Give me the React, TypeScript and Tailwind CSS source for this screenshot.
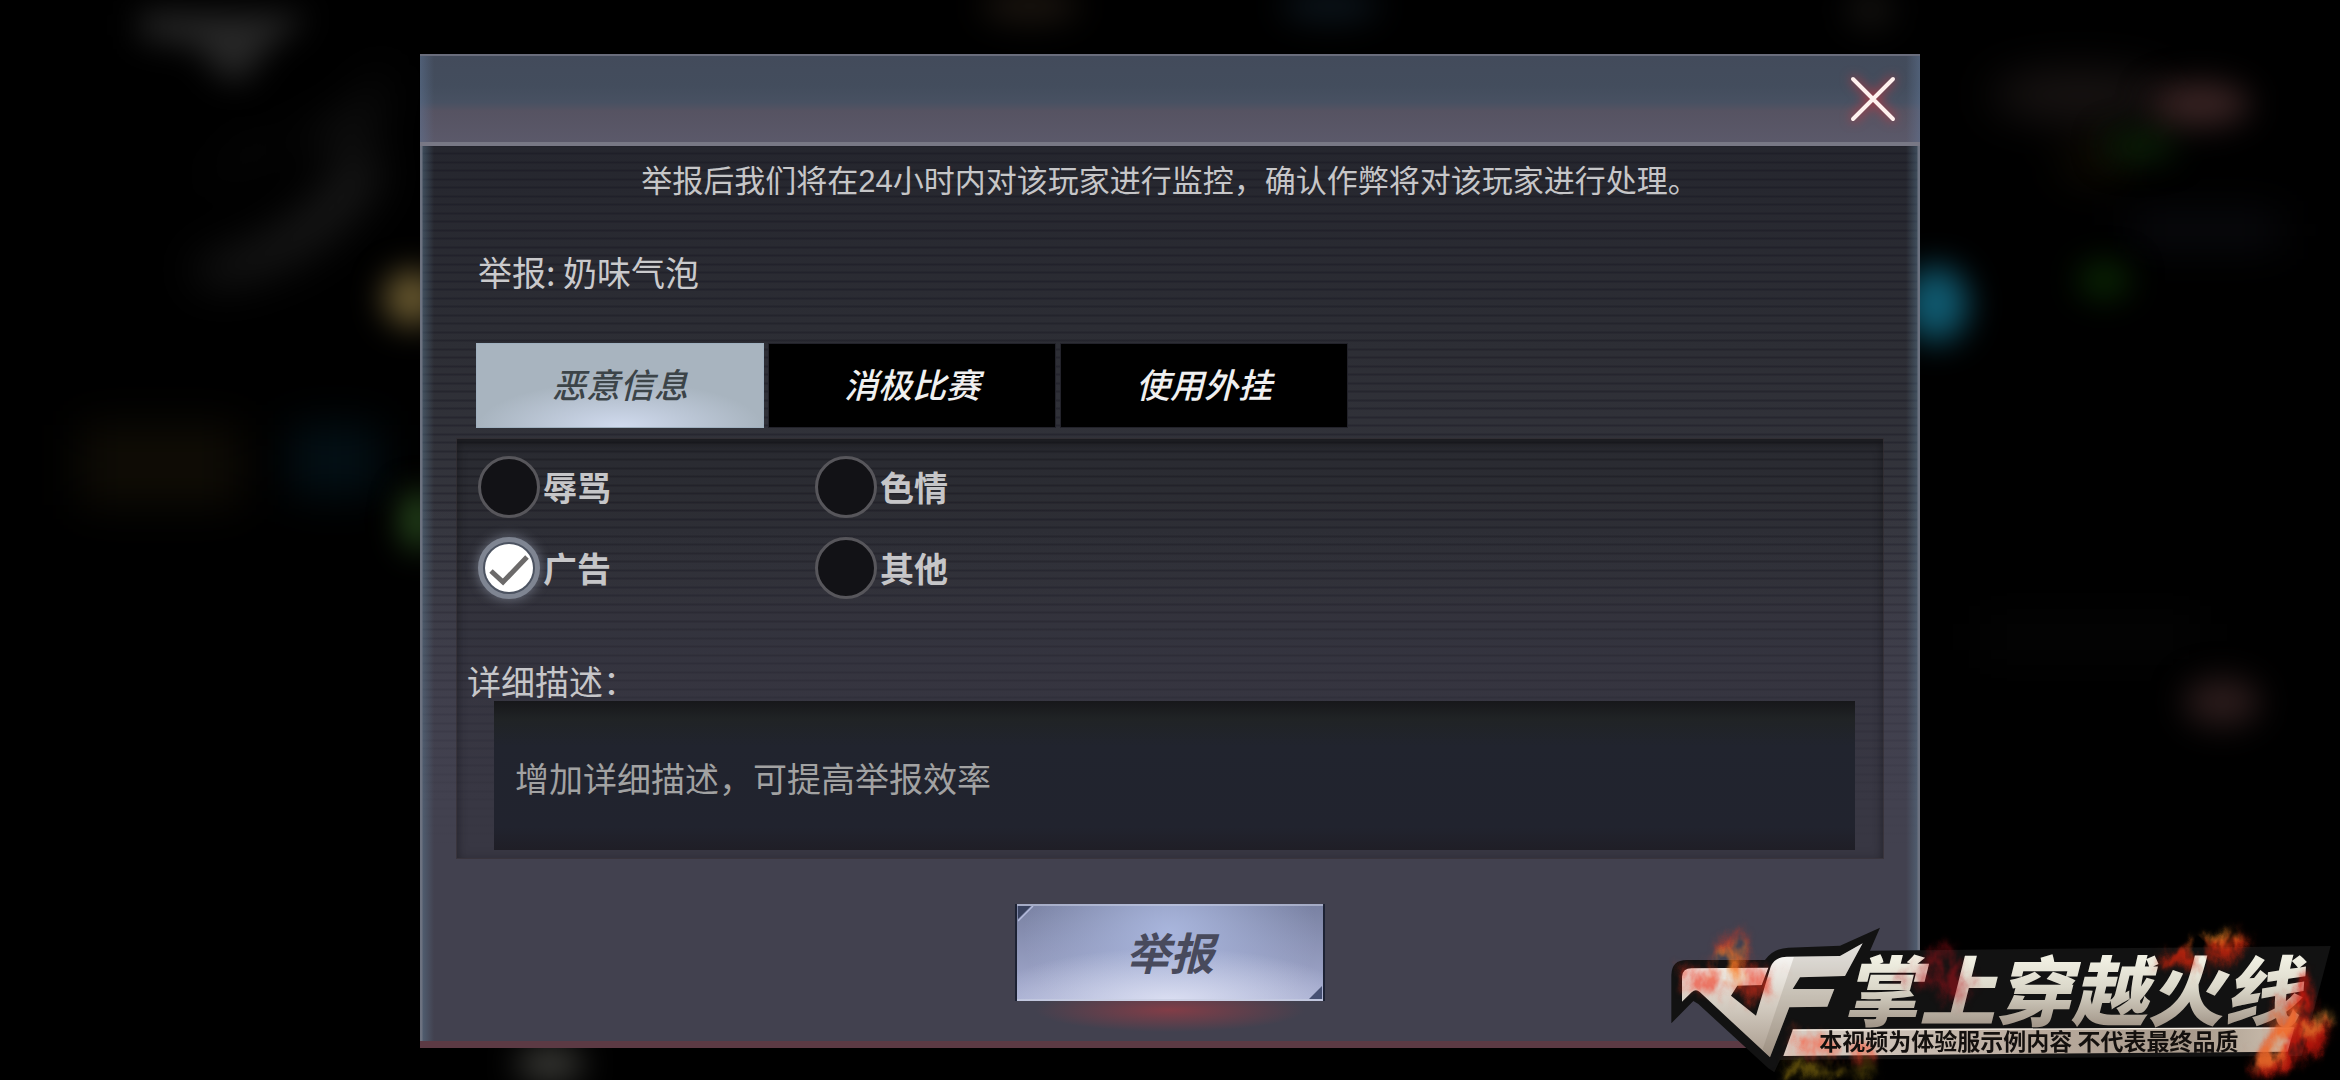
import { useState } from "react";

const TABS = ["恶意信息", "消极比赛", "使用外挂"];
const REASONS = ["辱骂", "色情", "广告", "其他"];

/* Out-of-focus lobby lights behind the dialog */
function Backdrop() {
  return (
    <svg
      viewBox="0 0 2340 1080"
      preserveAspectRatio="xMidYMid slice"
      aria-hidden="true"
      className="pointer-events-none absolute inset-0 h-full w-full"
    >
      <defs>
        <filter id="soft" x="-10%" y="-10%" width="120%" height="120%" colorInterpolationFilters="sRGB">
          <feGaussianBlur stdDeviation="16" />
        </filter>
        <filter id="wide" x="-10%" y="-10%" width="120%" height="120%" colorInterpolationFilters="sRGB">
          <feGaussianBlur stdDeviation="22" />
        </filter>
      </defs>
      <g filter="url(#wide)">
        <path d="M190 190 L350 110 L390 60 L370 150 L260 140 Z" fill="#101010" />
        <path d="M190 265 Q310 235 350 150 L385 170 Q330 270 210 285 Z" fill="#1a1a1a" />
        <rect x="80" y="425" width="160" height="80" fill="#0f0c05" />
        <rect x="290" y="425" width="90" height="70" fill="#031016" />
        <ellipse cx="2080" cy="95" rx="90" ry="24" fill="#1a1514" />
        <ellipse cx="2095" cy="160" rx="34" ry="20" fill="#120d04" />
        <rect x="2130" y="215" width="150" height="30" fill="#0b0c11" />
        <rect x="1980" y="620" width="220" height="34" fill="#050505" />
      </g>
      <g filter="url(#soft)">
        <path d="M140 12 L310 15 L265 50 L245 80 L225 80 L195 45 L140 38 Z" fill="#272727" />
        <ellipse cx="412" cy="298" rx="28" ry="28" fill="#6a5a30" />
        <ellipse cx="418" cy="520" rx="16" ry="30" fill="#2b5020" />
        <ellipse cx="1936" cy="304" rx="32" ry="38" fill="#105a70" />
        <ellipse cx="2200" cy="104" rx="50" ry="22" fill="#3a2424" />
        <ellipse cx="2140" cy="146" rx="36" ry="14" fill="#0c2408" />
        <ellipse cx="2104" cy="280" rx="26" ry="18" fill="#0a2804" />
        <ellipse cx="2222" cy="702" rx="38" ry="24" fill="#2c1c1c" />
        <ellipse cx="550" cy="1064" rx="34" ry="18" fill="#3c3c38" />
        <ellipse cx="1030" cy="6" rx="50" ry="16" fill="#1c1610" />
        <ellipse cx="1330" cy="6" rx="50" ry="16" fill="#0c151c" />
        <ellipse cx="1870" cy="10" rx="24" ry="18" fill="#141210" />
      </g>
    </svg>
  );
}

function Reason({ name, checked, onPick }: { name: string; checked: boolean; onPick: () => void }) {
  return (
    <label className="flex cursor-pointer items-center gap-[3px] text-[34px] leading-10 font-bold text-[#c6c6c8]">
      <span className="grid size-[62px] shrink-0 place-items-center">
        <input
          type="radio"
          name="reason"
          checked={checked}
          onChange={onPick}
          className="col-start-1 row-start-1 size-[62px] appearance-none rounded-full border-[3px] border-[#57565b] bg-[#121216] checked:border-[5px] checked:border-[#7f8592] checked:bg-[#4c5361] checked:shadow-[0_0_12px_1px_rgba(170,180,200,0.45)]"
        />
        {checked && (
          <svg viewBox="0 0 48 48" aria-hidden="true" className="pointer-events-none col-start-1 row-start-1 size-12">
            <circle cx="24" cy="24" r="24" fill="#fff" />
            <path d="M6 27 L18 38 L42 13" fill="none" stroke="#6c6a6a" strokeWidth="5" />
          </svg>
        )}
      </span>
      {name}
    </label>
  );
}

/* Channel watermark: CF mark, title plate, caption strip and flames */
function Watermark() {
  return (
    <svg
      viewBox="0 0 2100 540"
      role="img"
      aria-label="掌上穿越火线"
      className="pointer-events-none absolute right-0 bottom-0 z-20 w-[700px]"
    >
      <defs>
        <linearGradient id="metal" x1="0" y1="0" x2="0" y2="1">
          <stop offset="0" stopColor="#ffffff" />
          <stop offset="0.45" stopColor="#dcd6cc" />
          <stop offset="1" stopColor="#a89a8c" />
        </linearGradient>
        <linearGradient id="title" x1="0" y1="0" x2="0" y2="1">
          <stop offset="0.25" stopColor="#f0efe2" />
          <stop offset="0.5" stopColor="#dcd9cb" />
          <stop offset="0.85" stopColor="#a3978a" />
        </linearGradient>
        <linearGradient id="strip" x1="0" y1="0" x2="1" y2="0">
          <stop offset="0" stopColor="#d8cfc6" />
          <stop offset="0.5" stopColor="#b9aa9d" />
          <stop offset="0.8" stopColor="#a89a8c" />
          <stop offset="1" stopColor="#cfc2b2" />
        </linearGradient>
        <filter id="flame" x="-20%" y="-30%" width="140%" height="160%" colorInterpolationFilters="sRGB">
          <feTurbulence type="fractalNoise" baseFrequency="0.014 0.009" numOctaves="4" seed="11" result="n" />
          <feGaussianBlur in="SourceGraphic" stdDeviation="14" result="b" />
          <feDisplacementMap in="b" in2="n" scale="90" xChannelSelector="R" yChannelSelector="G" result="d" />
          <feColorMatrix in="n" type="matrix" values="0 0 0 0 1  0 0 0 0 1  0 0 0 0 1  0 0 3 0 -0.8" result="m" />
          <feComposite in="d" in2="m" operator="in" />
        </filter>
      </defs>

      <path
        d="M94 370 V225 Q95 180 140 180 H375 Q400 145 445 143 L600 137 L720 83 L690 152 L2072 138 L1985 468 L420 480 L403 517 L385 505 L175 312 L160 303 Z"
        fill="#121212"
      />
      <path
        d="M126 305 V230 Q128 205 155 205 L385 203 L365 255 L292 257 L273 287 L348 347 L392 200 Q405 170 440 170 L600 168 L668 130 L615 228 L480 232 L458 267 L583 267 L562 320 L448 322 L390 472 L180 277 Q168 265 155 277 Z"
        fill="url(#metal)"
      />
      <path
        d="M462 170 L600 168 L668 130 L615 228 L480 232 L458 267 L583 267 L562 320 L448 322 L390 472 L368 448 Z"
        fill="#6b5c4c"
        opacity="0.18"
      />
      <path d="M458 390 L1963 384 L1943 455 L430 468 Z" fill="url(#strip)" />
      <path d="M458 390 L1963 384" stroke="#f3ece2" strokeWidth="4" />

      <text
        x="610"
        y="360"
        fontSize="228"
        fontWeight="900"
        fontStyle="italic"
        fontFamily="'Noto Sans CJK SC', sans-serif"
        fill="url(#title)"
      >
        掌上穿越火线
      </text>

      <g filter="url(#flame)">
        <path d="M130 260 Q120 180 190 190 Q230 100 300 100 Q340 150 330 200 Q430 190 390 280 Q300 330 250 270 Q190 290 130 260Z" fill="#f0301a" opacity="0.6" />
        <path d="M220 200 Q270 80 310 160 Q330 230 280 280 Q240 250 220 200Z" fill="#ffa02a" opacity="0.6" />
        <path d="M780 250 Q760 190 840 200 Q940 80 960 180 Q1020 250 960 320 Q900 310 890 240 Z" fill="#b80f1a" opacity="0.5" />
        <path d="M460 400 Q600 380 640 430 Q740 450 690 480 Q560 490 450 460Z" fill="#ff4a2a" opacity="0.6" />
        <path d="M420 500 Q560 480 720 510 Q640 540 430 535Z" fill="#8a7010" opacity="0.7" />
        <path d="M1560 190 Q1600 130 1720 120 Q1790 100 1830 80 Q1820 160 1760 190 Q1660 220 1560 190Z" fill="#d0240c" opacity="0.8" />
        <path d="M1640 135 Q1740 90 1820 95 Q1760 145 1650 150Z" fill="#ff9a2a" opacity="0.7" />
        <path d="M1850 530 Q1850 400 1930 330 Q1960 220 2000 210 Q2050 270 2020 340 Q2080 360 2050 420 Q2000 510 1850 530Z" fill="#d8180c" opacity="0.8" />
        <path d="M1860 500 Q1860 410 1920 350 Q1970 310 1950 270 Q2000 360 1940 420 Q1940 500 1860 500Z" fill="#ff9a3a" opacity="0.6" />
        <path d="M1990 370 Q2050 370 2070 320 Q2080 380 2010 400Z" fill="#ffb040" opacity="0.7" />
      </g>

      <text x="538" y="451" fontSize="69" fontWeight="700" fontFamily="'Noto Sans CJK SC', sans-serif" fill="#14100e">
        本视频为体验服示例内容 不代表最终品质
      </text>
    </svg>
  );
}

export default function App() {
  const [tab, setTab] = useState(0);
  const [reason, setReason] = useState("广告");

  return (
    <main className="relative flex min-h-screen flex-col items-center overflow-hidden bg-black pt-[54px] pb-8 font-['Noto_Sans_CJK_SC',sans-serif]">
      <Backdrop />

      {/* Layers from the top: rim light, fade-out of the scan lines, scan lines, base shade */}
      <section
        role="dialog"
        aria-label="举报"
        className="z-10 flex w-full max-w-[1500px] flex-col bg-[linear-gradient(to_right,#6c7280_0,#6c7280_2px,rgba(100,135,160,0.38)_3px,transparent_14px,transparent_calc(100%-14px),rgba(100,135,160,0.38)_calc(100%-3px),#6c7280_calc(100%-2px),#6c7280),linear-gradient(to_bottom,transparent_45%,#42414f_80%),repeating-linear-gradient(to_bottom,transparent_0,transparent_5px,rgba(18,16,28,0.32)_6px,rgba(18,16,28,0.32)_7px,transparent_8px),linear-gradient(to_bottom,#25262e_9%,#2d2e35_30%,#36373f_50%,#42414f_75%)] bg-[length:100%_100%,100%_100%,100%_17px,100%_100%]"
      >
        <header className="flex h-[92px] items-center justify-end border-t-2 border-b-4 border-t-[#6a6d7c] border-b-[#787885] bg-[linear-gradient(to_right,rgba(100,125,160,0.4)_0,transparent_14px,transparent_calc(100%-14px),rgba(100,125,160,0.4)),linear-gradient(to_bottom,#434b5b_0%,#434d5d_35%,#485162_54%,#565362_64%,#5b596a_100%)] pr-[15px]">
          <button type="button" aria-label="关闭" className="grid size-16 cursor-pointer place-items-center">
            <svg
              viewBox="0 0 44 44"
              className="size-11 overflow-visible drop-shadow-[0_0_6px_#e03038]"
              fill="none"
              stroke="#fff1ee"
              strokeWidth="4"
              strokeLinecap="round"
            >
              <path d="M2 2 L42 42 M42 2 L2 42" />
            </svg>
          </button>
        </header>

        <p className="pt-4 text-center font-['Liberation_Sans','Noto_Sans_CJK_SC',sans-serif] text-[31px] leading-10 text-[#c6c6c8]">
          举报后我们将在24小时内对该玩家进行监控，确认作弊将对该玩家进行处理。
        </p>
        <h1 className="mt-[50px] px-[58px] text-[34px] leading-10 font-normal text-[#cacacc]">举报: 奶味气泡</h1>

        <div role="tablist" className="mx-14 mt-[51px] flex gap-1">
          {TABS.map((name, i) => (
            <button
              key={name}
              type="button"
              role="tab"
              aria-selected={tab === i}
              onClick={() => setTab(i)}
              className={
                tab === i
                  ? "h-[85px] w-72 cursor-pointer border border-[#9fb0bf] bg-[#a8b4bf] bg-[radial-gradient(ellipse_50%_55%_at_50%_100%,#d0daee,transparent)] pb-1 text-[34px] font-medium text-[#3c4448] italic"
                  : "h-[85px] w-72 cursor-pointer border border-[#22222a] bg-black pb-1 text-[34px] font-medium text-[#f0f0f0] italic"
              }
            >
              {name}
            </button>
          ))}
        </div>

        <div className="mx-9 mt-[10px] flex flex-col border border-[#3a3236]/50 bg-black/15 pt-[17px] pb-2 shadow-[inset_0_6px_8px_rgba(0,0,0,0.3),inset_0_0_12px_rgba(0,0,0,0.15)]">
          <fieldset aria-label="举报原因" className="ml-[21px] grid grid-cols-[repeat(2,337px)] gap-y-[19px]">
            {REASONS.map((name) => (
              <Reason key={name} name={name} checked={reason === name} onPick={() => setReason(name)} />
            ))}
          </fieldset>
          <label htmlFor="details" className="mt-[62px] ml-[10px] text-[34px] leading-10 text-[#c6c6c9]">
            详细描述：
          </label>
          <textarea
            id="details"
            placeholder="增加详细描述，可提高举报效率"
            className="mr-7 ml-[37px] h-[149px] resize-none bg-[linear-gradient(to_bottom,#17171a,#202325_12%,#21242e_30%,#21232e_85%,#1f1e26)] px-[21px] pt-[57px] text-[34px] leading-10 text-[#c6c6c9] outline-none placeholder:text-[#a2a2a2] placeholder:opacity-100"
          />
        </div>

        <div className="mt-[45px] flex justify-center bg-[radial-gradient(ellipse_135px_22px_at_50%_106px,#823d47,transparent)] pb-10">
          <button
            type="button"
            className="relative h-[97px] w-[310px] cursor-pointer border-x-2 border-x-[#1d2234] bg-[radial-gradient(ellipse_60%_55%_at_50%_100%,rgba(225,228,245,0.9),transparent),radial-gradient(ellipse_48%_110%_at_50%_30%,#a9b6dd,transparent),linear-gradient(to_bottom,#7981a2,#a5acd0)] pb-[3px] text-[44px] font-bold text-[#484a5c] italic shadow-[inset_0_2px_0_rgba(200,205,225,0.55),inset_0_-2px_0_rgba(200,205,225,0.7)]"
          >
            举报
            <svg viewBox="0 0 16 16" aria-hidden="true" className="absolute top-[2px] left-[1px] size-4">
              <path d="M0 0 H13 L0 13 Z" fill="#39425f" />
              <path d="M15 0 L0 15" stroke="#b3badb" strokeWidth="1.5" />
            </svg>
            <svg viewBox="0 0 16 16" aria-hidden="true" className="absolute right-[1px] bottom-[2px] size-4">
              <path d="M16 16 H3 L16 3 Z" fill="#465072" />
            </svg>
          </button>
        </div>
        <div className="h-[7px] bg-[#5c3a44]" />
      </section>

      <Watermark />
    </main>
  );
}
